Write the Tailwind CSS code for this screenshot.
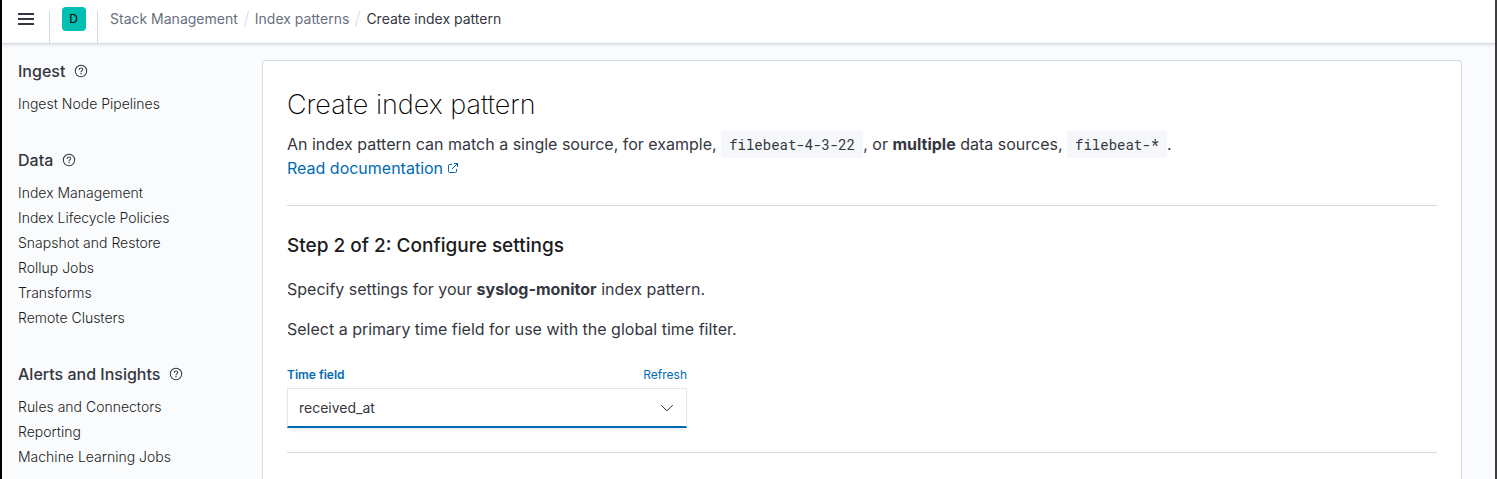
<!DOCTYPE html>
<html lang="en">
<head>
<meta charset="utf-8">
<meta name="viewport" content="width=device-width, initial-scale=1">
<title>Create index pattern</title>
<script src="https://cdn.jsdelivr.net/npm/@tailwindcss/browser@4"></script>
</head>
<body class="flex min-h-screen flex-col border-x-2 border-l-black border-r-[#3d3d3f] bg-[#fafbfd] font-['Inter',sans-serif] text-[#343741]">
<svg class="hidden" aria-hidden="true">
  <symbol id="help" viewBox="0 0 16 16">
    <path fill="currentColor" fill-rule="evenodd" d="M8 1.800a6.200 6.200 0 1 1 0 12.400A6.200 6.200 0 0 1 8 1.800Zm0 1a5.200 5.200 0 1 0 0 10.400A5.200 5.200 0 0 0 8 2.800Z"/>
    <path fill="currentColor" d="M7.400 10h1.200v1.200H7.400V10ZM8 4.600c1.300 0 2.200.8 2.200 1.900 0 .8-.4 1.300-1.100 1.700-.4.25-.55.45-.55.9v.2h-1v-.3c0-.7.3-1.150.95-1.500.5-.3.7-.55.7-.95 0-.6-.5-1-1.200-1s-1.200.4-1.250 1.100H5.700c.05-1.250.95-2.050 2.300-2.050Z"/>
  </symbol>
</svg>
<header class="flex h-11 shrink-0 items-stretch border-b border-[#d3dae6] bg-white shadow-[0_1px_3px_rgba(105,112,125,0.2)]">
  <button type="button" aria-label="Toggle primary navigation" class="flex w-12 justify-center pt-[11px]">
    <svg class="size-4" viewBox="0 0 16 16" fill="#343741"><path d="M0 2h16v2H0zM0 7h16v2H0zM0 12h16v2H0z"/></svg>
  </button>
  <div class="-ml-px mt-[11px] w-px bg-[#d3dae6]"></div>
  <div class="flex w-[47px] justify-center pt-[7px]">
    <button type="button" aria-label="Default space" class="size-6 rounded bg-[#00bfb3] text-xs text-black">D</button>
  </div>
  <div class="mt-[11px] w-px bg-[#d3dae6]"></div>
  <nav aria-label="Breadcrumbs" class="ml-3 pt-[9px] text-sm leading-5">
    <ol class="flex items-center gap-2 text-[#69707d]">
      <li><a href="#">Stack Management</a></li>
      <li aria-hidden="true" class="h-4 w-px rotate-15 bg-[#d3dae6]"></li>
      <li><a href="#">Index patterns</a></li>
      <li aria-hidden="true" class="h-4 w-px rotate-15 bg-[#d3dae6]"></li>
      <li aria-current="page" class="text-[#343741]">Create index pattern</li>
    </ol>
  </nav>
</header>
<div class="flex flex-1">
  <nav aria-label="Management" class="flex w-[260px] shrink-0 flex-col gap-8 pt-[15px] pl-4 text-sm leading-[25px] font-light text-[#1a1c21]">
    <section>
      <h2 class="mb-2 flex items-center gap-2 text-base leading-6 font-medium text-[#343741]">Ingest <svg class="size-4"><use href="#help"/></svg></h2>
      <ul>
        <li><a href="#">Ingest Node Pipelines</a></li>
      </ul>
    </section>
    <section>
      <h2 class="mb-2 flex items-center gap-2 text-base leading-6 font-medium text-[#343741]">Data <svg class="size-4"><use href="#help"/></svg></h2>
      <ul>
        <li><a href="#">Index Management</a></li>
        <li><a href="#">Index Lifecycle Policies</a></li>
        <li><a href="#">Snapshot and Restore</a></li>
        <li><a href="#">Rollup Jobs</a></li>
        <li><a href="#">Transforms</a></li>
        <li><a href="#">Remote Clusters</a></li>
      </ul>
    </section>
    <section>
      <h2 class="mb-2 flex items-center gap-2 text-base leading-6 font-medium text-[#343741]">Alerts and Insights <svg class="size-4"><use href="#help"/></svg></h2>
      <ul>
        <li><a href="#">Rules and Connectors</a></li>
        <li><a href="#">Reporting</a></li>
        <li><a href="#">Machine Learning Jobs</a></li>
      </ul>
    </section>
  </nav>
  <main class="mt-4 mr-[33px] min-w-0 flex-1 rounded-t border border-b-0 border-[#d3dae6] bg-white px-6 pt-6">
    <h1 class="text-[27px] leading-10 font-extralight text-black">Create index pattern</h1>
    <p class="mt-[7px] leading-6">An index pattern can match a single source, for example, <code class="bg-[#f5f7fa] px-2 py-1 font-['Roboto_Mono','Liberation_Mono',monospace] text-sm">filebeat-4-3-22</code>, or <strong class="font-bold">multiple</strong> data sources, <code class="bg-[#f5f7fa] px-2 py-1 font-['Roboto_Mono','Liberation_Mono',monospace] text-sm">filebeat-*</code>.<br>
      <a href="#" class="inline-flex items-center gap-1 text-[#006bb4]">Read documentation
        <svg class="size-3" viewBox="0 0 12 12" fill="none" stroke="currentColor"><path d="M5 2.500H2.500a1 1 0 0 0-1 1v6a1 1 0 0 0 1 1h6a1 1 0 0 0 1-1V7M7 1.500h3.500V5M10.500 1.500 5 7"/></svg></a></p>
    <hr class="mt-[25px] mb-6 border-[#d3dae6]">
    <h2 class="text-[19px] leading-8 font-medium text-[#1a1c21]">Step 2 of 2: Configure settings</h2>
    <p class="mt-[15px] leading-6">Specify settings for your <strong class="font-bold">syslog-monitor</strong> index pattern.</p>
    <p class="mt-4 leading-6">Select a primary time field for use with the global time filter.</p>
    <form class="mt-[25px] max-w-[400px]">
      <div class="mb-1 flex justify-between text-xs leading-[18px] text-[#006bb4]">
        <label for="time-field" class="font-semibold">Time field</label>
        <button type="button">Refresh</button>
      </div>
      <div class="relative">
        <select id="time-field" class="block h-10 w-full appearance-none border border-b-2 border-[#e4e6ee] border-b-[#006bb4] bg-white pr-10 pl-[11px] text-sm shadow-[0_4px_4px_-2px_rgba(105,112,125,0.15)] outline-none">
          <option>received_at</option>
        </select>
        <svg class="pointer-events-none absolute top-3 right-3 size-4" viewBox="0 0 16 16" fill="none" stroke="#343741" stroke-linecap="round" stroke-linejoin="round"><path d="M2.500 5.500 8 10.800l5.500-5.300"/></svg>
      </div>
    </form>
    <hr class="mt-6 border-[#d3dae6]">
  </main>
</div>
</body>
</html>
